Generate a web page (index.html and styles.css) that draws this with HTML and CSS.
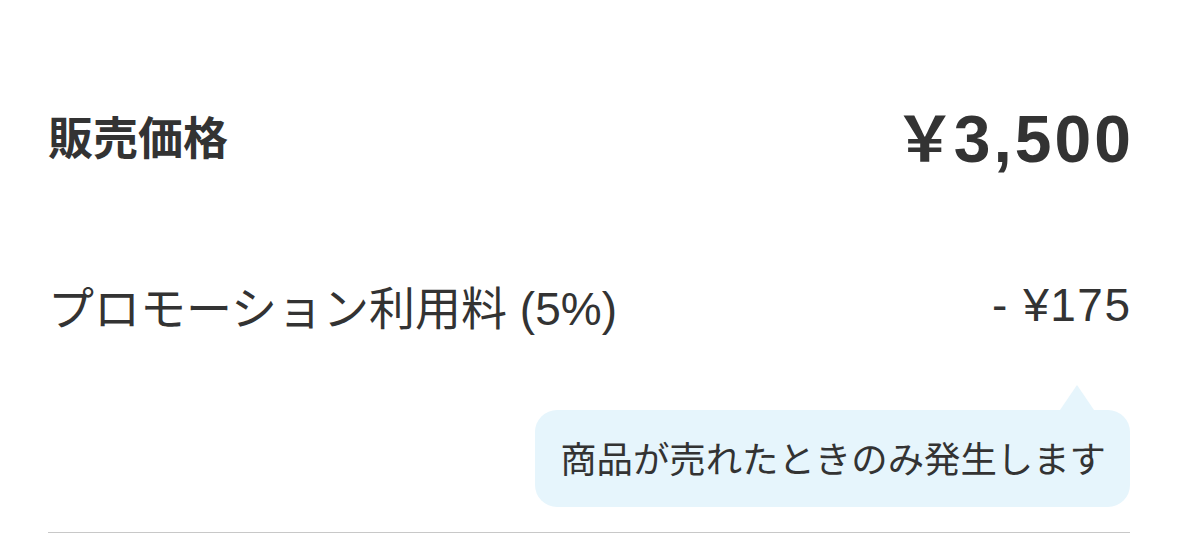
FILE: index.html
```html
<!doctype html>
<html lang="ja">
  <head>
    <meta charset="UTF-8" />
    <meta name="viewport" content="width=device-width, initial-scale=1.0" />
    <title>販売価格</title>
    <link rel="stylesheet" href="styles.css">
  </head>
  <body>
    <div class="sheet">
      <div class="row row-price">
        <div class="label-strong">販売価格</div>
        <div class="price"><span class="yen">￥</span>3,500</div>
      </div>

      <div class="row row-fee">
        <div class="label">プロモーション利用料 (5%)</div>
        <div class="fee">- ¥175</div>
      </div>

      <div class="hint-wrap">
        <div class="hint">商品が売れたときのみ発生します</div>
      </div>

      <div class="divider"></div>
    </div>
  </body>
</html>
```

FILE: styles.css
```css
body {
  margin: 0;
  background: #fff;
  color: #333;
  font-family: "Liberation Sans", "Noto Sans CJK JP", sans-serif;
}
.sheet {
  padding: 0 49px 0 48px;
}
.row {
  display: flex;
  justify-content: space-between;
  align-items: center;
}
.row-price {
  margin-top: 87px;
  height: 96px;
}
.label-strong {
  font-size: 45px;
  font-weight: bold;
}
.price {
  font-size: 66px;
  font-weight: bold;
  letter-spacing: 3px;
  margin-right: -4px;
}
.yen {
  font-size: 62px;
  margin-right: -5px;
}
.row-fee {
  margin-top: 92px;
  height: 60px;
}
.label {
  font-size: 46px;
}
.fee {
  font-size: 46px;
  letter-spacing: 1.5px;
  margin-right: -1.5px;
}
.hint-wrap {
  display: flex;
  justify-content: flex-end;
  margin-top: 75px;
}
.hint {
  position: relative;
  background: #e6f5fc;
  border-radius: 22px;
  height: 97px;
  padding: 0 24px 4px 25px;
  box-sizing: border-box;
  display: flex;
  align-items: center;
  font-size: 36.4px;
}
/* little arrow pointing up at the fee */
.hint::before {
  content: "";
  position: absolute;
  top: -25px;
  right: 36px;
  border-left: 17px solid transparent;
  border-right: 17px solid transparent;
  border-bottom: 25px solid #e6f5fc;
}
.divider {
  margin-top: 25px;
  height: 1px;
  background: #c8c8c8;
}
```
